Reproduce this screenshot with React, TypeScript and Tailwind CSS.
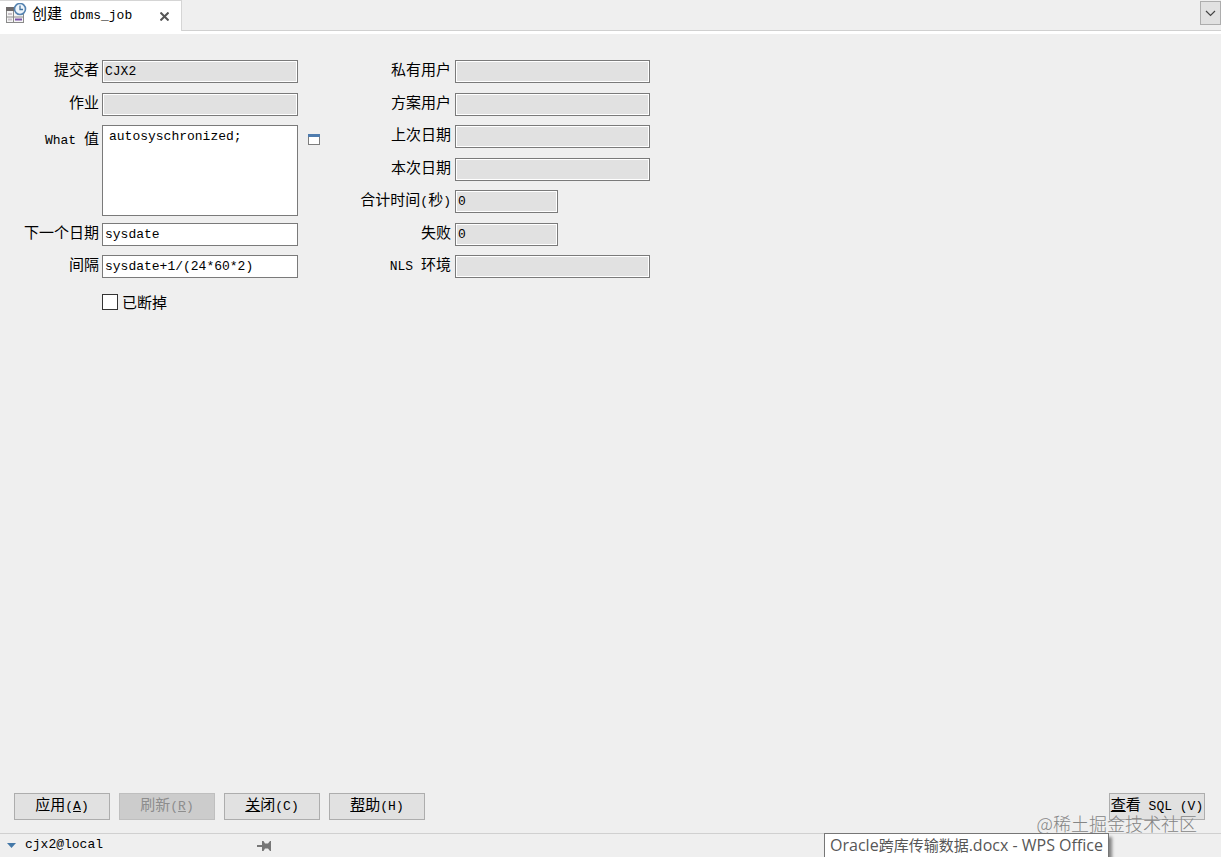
import type { ReactNode } from "react";
import clsx from "clsx";

type FieldProps = {
  id: string;
  label: ReactNode;
  value?: string;
  readOnly?: boolean;
  short?: boolean;
};

/* Latin text is set in a smaller monospace next to the CJK glyphs */
function Mono({ children }: { children: ReactNode }) {
  return (
    <span className="whitespace-pre font-['Liberation_Mono','Noto_Sans_CJK_SC',monospace] text-[13px]">
      {children}
    </span>
  );
}

function Field({ id, label, value = "", readOnly, short }: FieldProps) {
  return (
    <>
      <label htmlFor={id} className="h-5 text-right leading-[18px]">
        {label}
      </label>
      <input
        id={id}
        type="text"
        defaultValue={value}
        readOnly={readOnly}
        className={clsx(
          "h-[23px] border border-[#7a7a7a] px-0.5 font-['Liberation_Mono','Noto_Sans_CJK_SC',monospace] text-[13px] outline-none",
          short ? "w-[103px]" : "w-full",
          readOnly ? "bg-[#e1e1e1] shadow-[inset_0_0_0_1px_#fff]" : "bg-white"
        )}
      />
    </>
  );
}

function ActionButton({
  children,
  disabled,
}: {
  children: ReactNode;
  disabled?: boolean;
}) {
  return (
    <button
      type="button"
      disabled={disabled}
      className={clsx(
        "h-[27px] w-24 whitespace-nowrap border pb-0.5 text-center leading-5",
        disabled
          ? "border-[#bfbfbf] bg-[#cccccc] text-[#8d8d8d]"
          : "border-[#adadad] bg-[#e1e1e1]"
      )}
    >
      {children}
    </button>
  );
}

function JobIcon() {
  return (
    <svg width="21" height="22" viewBox="0 0 21 22" aria-hidden="true">
      <rect x="0.5" y="4.5" width="17" height="15" fill="#f5f5f5" stroke="#8a8a8a" />
      <path d="M0 4h9v4H0z" fill="#6e6a6a" />
      <path d="M0 14h18M7.5 8v12M0 19.5h18" stroke="#8a8a8a" fill="none" />
      <path d="M2 11h4M2 16.5h4" stroke="#c9c3c9" strokeWidth="2" />
      <path d="M9 16.5h7" stroke="#7a52a8" strokeWidth="2" />
      <circle cx="14" cy="6" r="5.5" fill="#eef5fb" stroke="#5583b0" strokeWidth="1.6" />
      <path d="M14 2.5V6.5h3" fill="none" stroke="#44739f" strokeWidth="1.3" />
    </svg>
  );
}

function TabBar() {
  return (
    <header className="flex h-[34px] items-start border-b-[3px] border-white bg-[#efefef]">
      <div className="flex h-[31px] w-[182px] items-center border-t border-r border-[#d5d5d5] bg-white pb-1 pl-1.5">
        <JobIcon />
        <span className="ml-[5px] leading-5">
          创建<Mono> dbms_job</Mono>
        </span>
        <button type="button" aria-label="关闭标签" className="ml-auto mr-3 pt-1">
          <svg width="9" height="9" viewBox="0 0 9 9">
            <path d="M0.5 0.5l8 8M8.5 0.5l-8 8" stroke="#555" strokeWidth="2" />
          </svg>
        </button>
      </div>
      <div className="flex h-[31px] flex-1 justify-end border-b border-[#d0d0d0]">
        <button
          type="button"
          aria-label="标签列表"
          className="mt-px flex h-6 w-[21px] items-center justify-center border border-[#adadad] bg-[#e1e1e1]"
        >
          <svg width="11" height="7" viewBox="0 0 11 7">
            <path d="M1 1l4.5 4.5L10 1" fill="none" stroke="#444" strokeWidth="1.2" />
          </svg>
        </button>
      </div>
    </header>
  );
}

function JobForm() {
  return (
    <main className="flex flex-1 items-start pt-[26px]">
      <div className="grid grid-cols-[99px_196px] grid-rows-[33px_32px_33px_32px_33px_32px_33px_30px] items-start gap-x-[3px]">
        <Field id="submitter" label="提交者" value="CJX2" readOnly />
        <Field id="job" label="作业" readOnly />
        <label htmlFor="what" className="pt-1 text-right leading-[18px]">
          <Mono>What </Mono>值
        </label>
        <div className="row-span-3 flex items-start">
          <textarea
            id="what"
            defaultValue="autosyschronized;"
            className="h-[91px] w-full shrink-0 resize-none border border-[#7a7a7a] bg-white px-1.5 pt-px font-['Liberation_Mono','Noto_Sans_CJK_SC',monospace] text-[13px] leading-5 outline-none"
          />
          <button type="button" aria-label="编辑" className="ml-2.5 mt-[9px] shrink-0">
            <svg width="12" height="11" viewBox="0 0 12 11">
              <rect x="0.5" y="0.5" width="11" height="10" fill="#fff" stroke="#7d7d7d" />
              <path d="M0 0h12v3H0z" fill="#4f7cae" />
            </svg>
          </button>
        </div>
        <div className="row-span-2" />
        <Field id="next" label="下一个日期" value="sysdate" />
        <Field id="interval" label="间隔" value="sysdate+1/(24*60*2)" />
        <label className="col-start-2 row-start-8 flex items-center gap-1 pt-1 leading-5">
          <input
            type="checkbox"
            className="size-4 appearance-none border border-[#333] bg-white checked:bg-[#333]"
          />
          已断掉
        </label>
      </div>
      <div className="ml-[50px] grid grid-cols-[103px_195px] grid-rows-[33px_32px_33px_32px_33px_32px_33px] items-start gap-x-1">
        <Field id="priv" label="私有用户" readOnly />
        <Field id="schema" label="方案用户" readOnly />
        <Field id="last" label="上次日期" readOnly />
        <Field id="this" label="本次日期" readOnly />
        <Field
          id="total"
          label={
            <>
              合计时间<Mono>(</Mono>秒<Mono>)</Mono>
            </>
          }
          value="0"
          readOnly
          short
        />
        <Field id="failures" label="失败" value="0" readOnly short />
        <Field
          id="nls"
          label={
            <>
              <Mono>NLS </Mono>环境
            </>
          }
          readOnly
        />
      </div>
    </main>
  );
}

function ActionBar() {
  return (
    <div className="flex items-center gap-[9px] pr-4 pb-[13px] pl-3.5">
      <ActionButton>
        应用<Mono>(<u>A</u>)</Mono>
      </ActionButton>
      <ActionButton disabled>
        刷新<Mono>(<u>R</u>)</Mono>
      </ActionButton>
      <ActionButton>
        <u>关</u>闭<Mono>(C)</Mono>
      </ActionButton>
      <ActionButton>
        <u>帮</u>助<Mono>(H)</Mono>
      </ActionButton>
      <div className="ml-auto">
        <ActionButton>
          <u>查</u>看<Mono> SQL (V)</Mono>
        </ActionButton>
      </div>
    </div>
  );
}

function StatusBar() {
  return (
    <footer className="flex h-6 items-center border-t border-[#d0d0d0] pl-[7px]">
      <svg width="9" height="5" viewBox="0 0 9 5" aria-hidden="true">
        <path d="M0 0h9L4.5 5z" fill="#4478a8" />
      </svg>
      <span className="ml-[9px] w-[232px] pb-1 leading-5">
        <Mono>cjx2@local</Mono>
      </span>
      <svg width="14" height="10" viewBox="0 0 14 10" aria-hidden="true">
        <path d="M0 4h5V0h1.5l1.5 2.5h3L13 0h1v10h-1l-2-2.5H8L6.5 10H5V6H0z" fill="#777" />
      </svg>
    </footer>
  );
}

export default function App() {
  return (
    <div className="relative flex min-h-screen flex-col overflow-hidden bg-[#efefef] font-['Noto_Sans_CJK_SC',sans-serif] text-[15px] text-black">
      <TabBar />
      <JobForm />
      <ActionBar />
      <StatusBar />
      <div className="pointer-events-none absolute right-6 bottom-5 text-lg leading-7 font-light text-[#858585]">
        @稀土掘金技术社区
      </div>
      <div
        role="tooltip"
        className="absolute right-28 bottom-0 h-6 whitespace-nowrap border border-b-0 border-[#767676] bg-white px-[5px] font-['Open_Sans','Noto_Sans_CJK_SC',sans-serif] text-base leading-[22px] text-[#575757] shadow-[3px_4px_3px_rgba(0,0,0,0.45)]"
      >
        Oracle<span className="text-[15px]">跨库传输数据</span>.docx - WPS Office
      </div>
    </div>
  );
}
